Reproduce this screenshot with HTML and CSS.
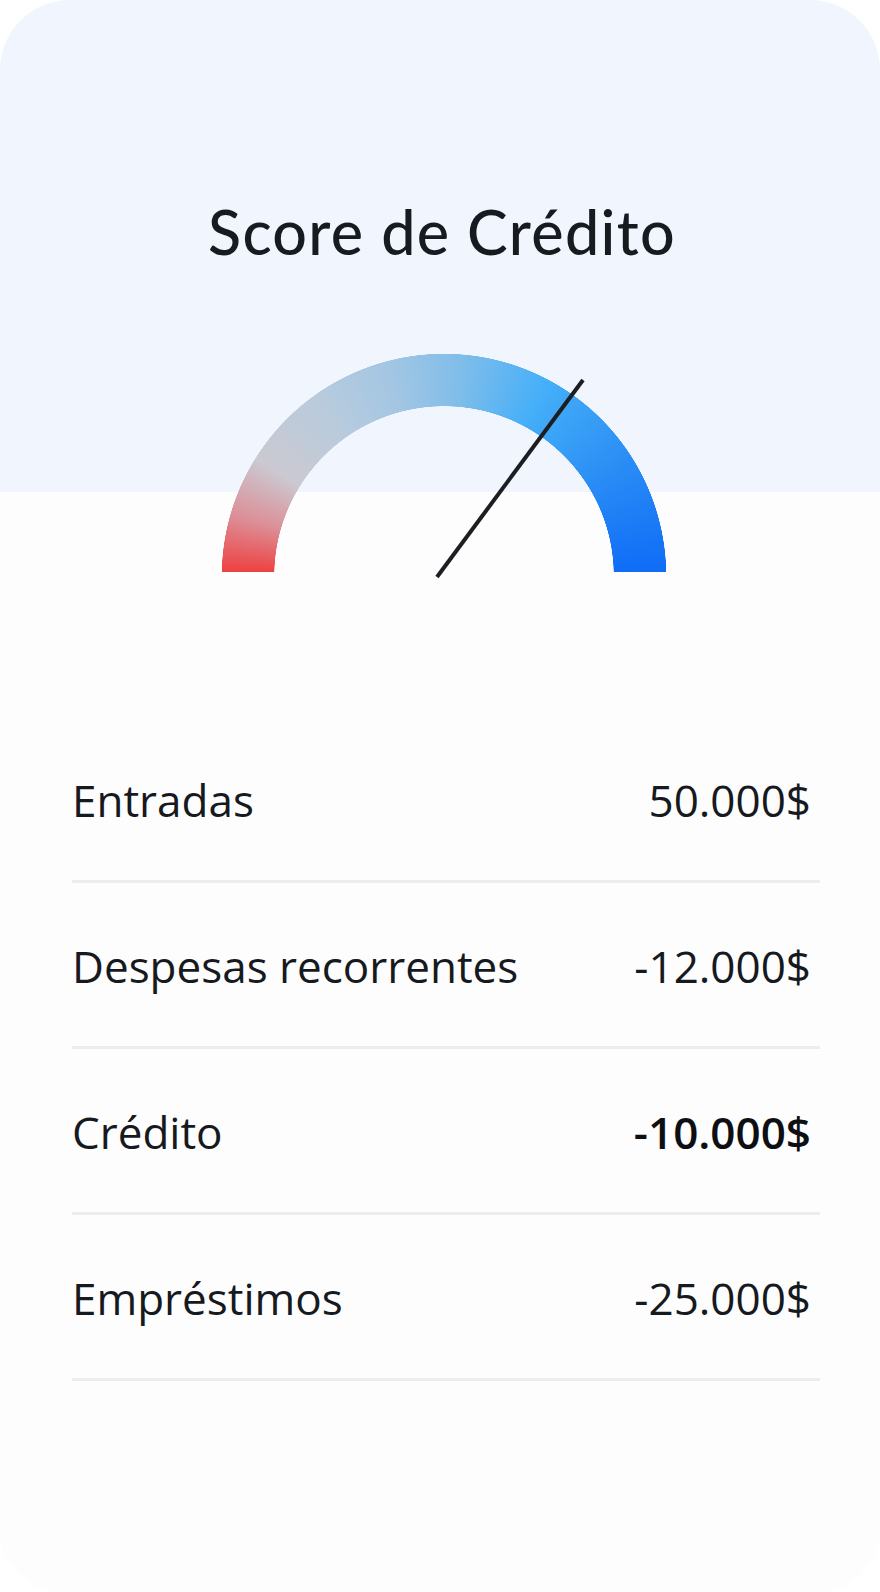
FILE: index.html
```html
<!DOCTYPE html>
<html lang="pt">
<head>
    <meta charset="UTF-8">
    <meta name="viewport" content="width=device-width, initial-scale=1.0">
    <title>Score de Crédito</title>
    <link rel="stylesheet" href="styles.css">
</head>
<body>
    <div class="score-card">
        <h1 class="score-title">Score de Crédito</h1>

        <!-- Gauge -->
        <div class="gauge-wrap">
            <div class="gauge">
                <div class="gauge-arc"></div>
                <svg class="gauge-needle" width="444" height="232" viewBox="0 0 444 232">
                    <line x1="215" y1="223" x2="361" y2="26" stroke="#1c1e21" stroke-width="4"/>
                </svg>
            </div>
        </div>

        <!-- Summary rows -->
        <ul class="summary">
            <li class="summary-row">
                <span class="label">Entradas</span>
                <span class="value">50.000$</span>
            </li>
            <li class="summary-row">
                <span class="label">Despesas recorrentes</span>
                <span class="value">-12.000$</span>
            </li>
            <li class="summary-row">
                <span class="label">Crédito</span>
                <span class="value strong">-10.000$</span>
            </li>
            <li class="summary-row">
                <span class="label">Empréstimos</span>
                <span class="value">-25.000$</span>
            </li>
        </ul>
    </div>
</body>
</html>
```

FILE: styles.css
```css
body {
    margin: 0;
    padding: 0;
    background: #fff;
    font-family: "Open Sans", "Noto Sans", sans-serif;
    color: #16191d;
}

.score-card {
    height: 1592px;
    box-sizing: border-box;
    padding-top: 196px;
    border-radius: 70px 70px 62px 62px;
    background: linear-gradient(to bottom, #f0f5fe 0, #f0f5fe 492px, #fdfdfd 492px);
    overflow: hidden;
}

.score-title {
    margin: 0;
    padding-left: 4px;
    font-family: "Lato", sans-serif;
    font-weight: 500;
    font-size: 61px;
    line-height: 72px;
    letter-spacing: 1.3px;
    text-align: center;
    color: #171a1f;
}

/* Gauge */
.gauge-wrap {
    display: flex;
    justify-content: center;
    padding-left: 8px;
    margin-top: 86px;
}

.gauge {
    position: relative;
    width: 444px;
    height: 218px;
}

.gauge-arc {
    width: 100%;
    height: 100%;
    background: conic-gradient(from -90deg at 50% 222px,
        #ef3b3b 0deg,
        #dc8f97 16deg,
        #cbc9d1 32deg,
        #b8cbdd 55deg,
        #a3c6e3 75deg,
        #7fbdea 95deg,
        #45aff8 118deg,
        #2c90f5 145deg,
        #0e6bf6 180deg,
        #0e6bf6 360deg);
    -webkit-mask-image: radial-gradient(circle at 50% 222px, transparent 169.5px, #000 170px, #000 222px, transparent 222.5px);
    mask-image: radial-gradient(circle at 50% 222px, transparent 169.5px, #000 170px, #000 222px, transparent 222.5px);
}

.gauge-needle {
    position: absolute;
    top: 0;
    left: 0;
}

/* Summary list */
.summary {
    list-style: none;
    margin: 145px 60px 0 72px;
    padding: 0;
}

.summary-row {
    display: flex;
    justify-content: space-between;
    padding: 53px 9px 50px 0;
    border-bottom: 3px solid #ededed;
    font-size: 44px;
    line-height: 60px;
}

.value.strong {
    font-weight: 600;
    color: #0d0f12;
}
```
